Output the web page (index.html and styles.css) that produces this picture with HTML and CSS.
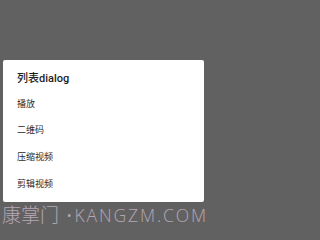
FILE: index.html
```html
<!DOCTYPE html>
<html lang="zh-CN">
<head>
<meta charset="utf-8">
<title>列表dialog</title>
<link rel="stylesheet" href="styles.css">
</head>
<body>
<div class="screen">
  <div class="dialog">
    <div class="title">列表dialog</div>
    <ul class="list">
      <li class="item">播放</li>
      <li class="item">二维码</li>
      <li class="item">压缩视频</li>
      <li class="item">剪辑视频</li>
    </ul>
  </div>
  <div class="watermark"><span class="wm-cn">康掌门</span><span class="wm-dot">•</span><span class="wm-en">KANGZM.COM</span></div>
</div>
</body>
</html>
```
FILE: styles.css
```css
html, body {
  margin: 0;
  padding: 0;
  background: #616161;
}
body {
  font-family: Roboto, "Noto Sans CJK SC", sans-serif;
}
.screen {
  width: 206px;
  height: 237px;
  overflow: hidden;
  box-sizing: border-box;
  padding: 60px 2px 0 3px;
}
.dialog {
  background: #ffffff;
  border-radius: 2px;
  height: 142px;
  box-sizing: border-box;
  padding-bottom: 4px;
}
.title {
  padding: 12px 14px 5.65px;
  font-size: 11px;
  line-height: 13px;
  font-weight: 500;
  color: #1e1e1e;
}
.list {
  list-style: none;
  margin: 0;
  padding: 0;
}
.item {
  height: 26.7px;
  line-height: 26.7px;
  padding-left: 14px;
  font-size: 9px;
  color: #2a2a2a;
}
.watermark {
  margin: 2px 0 0 -1px;
  white-space: nowrap;
  color: #b4a7b6;
  line-height: 20px;
  font-weight: 300;
}
.wm-cn {
  font-family: "Noto Sans CJK SC", sans-serif;
  font-size: 19px;
}
.wm-dot {
  font-family: "Open Sans", sans-serif;
  font-size: 17px;
  margin-left: 7px;
}
.wm-en {
  font-family: "Open Sans", sans-serif;
  font-size: 17.5px;
  letter-spacing: 1.9px;
  margin-left: 2px;
}
```
